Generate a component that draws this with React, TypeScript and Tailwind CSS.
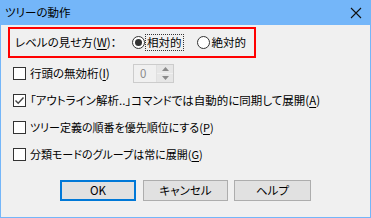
import React from "react";

const FONT = "font-['Meiryo_UI','Noto_Sans_CJK_JP',sans-serif] [font-feature-settings:'palt']";

function U({ children }: { children: React.ReactNode }) {
  return <span className="underline underline-offset-2">{children}</span>;
}

function Checkbox({ checked }: { checked?: boolean }) {
  return (
    <span className="w-[13px] h-[13px] bg-white border border-[#333] flex items-center justify-center shrink-0">
      {checked && (
        <svg width="11" height="11" viewBox="0 0 11 11">
          <path d="M1.5 5.5 L4.2 8.2 L9.5 2.5" fill="none" stroke="#444" strokeWidth="1.4" />
        </svg>
      )}
    </span>
  );
}

function Radio({ checked }: { checked?: boolean }) {
  return (
    <span className="w-[13px] h-[13px] rounded-full bg-white border border-[#333] flex items-center justify-center shrink-0">
      {checked && <span className="w-[7px] h-[7px] rounded-full bg-[#333]" />}
    </span>
  );
}

function Row({ checked, children }: { checked?: boolean; children: React.ReactNode }) {
  return (
    <div className="h-[27px] flex items-center pl-[12px] gap-[4px]">
      <Checkbox checked={checked} />
      {children}
    </div>
  );
}

export default function App() {
  return (
    <div className={`w-[371px] h-[218px] bg-[#74b6f9] flex flex-col text-[11.5px] text-black leading-none ${FONT}`}>
      <div className="h-[25px] flex items-center justify-between pl-[5px] pr-[9px] shrink-0">
        <span>ツリーの動作</span>
        <svg width="12" height="12" viewBox="0 0 12 12">
          <path d="M1 1 L11 11 M11 1 L1 11" stroke="#111" strokeWidth="1.1" />
        </svg>
      </div>
      <div className="flex-1 mx-[1px] mb-[1px] bg-[#f0f0f0] flex flex-col">
        <div className="ml-[7px] mt-[2px] w-[248px] h-[31px] border-2 border-[#ff0000] flex items-center pl-[5px]">
          <span className="w-[117px]">
            レベルの見せ方(<U>W</U>)：
          </span>
          <Radio checked />
          <span className="ml-[1px] px-[1px] py-[2px] outline-1 outline-dotted outline-[#333]">相対的</span>
          <span className="ml-[14px]">
            <Radio />
          </span>
          <span className="ml-[2px]">絶対的</span>
        </div>
        <div className="h-[2px]" />
        <Row>
          <span className="w-[99px]">
            行頭の無効桁(<U>I</U>)
          </span>
          <div className="w-[41px] h-[19px] border border-[#cccccc] bg-[#f0f0f0] flex">
            <span className="flex-1 flex items-center pl-[6px] text-[#8a8a8a]">0</span>
            <div className="w-[17px] flex flex-col border-l border-[#e0e0e0]">
              <div className="flex-1 flex items-center justify-center bg-[#e6e6e6] border-b border-[#f0f0f0]">
                <svg width="7" height="4" viewBox="0 0 7 4">
                  <path d="M0 4 L3.5 0 L7 4 Z" fill="#8a8a8a" />
                </svg>
              </div>
              <div className="flex-1 flex items-center justify-center bg-[#e6e6e6]">
                <svg width="7" height="4" viewBox="0 0 7 4">
                  <path d="M0 0 L3.5 4 L7 0 Z" fill="#8a8a8a" />
                </svg>
              </div>
            </div>
          </div>
        </Row>
        <Row checked>
          <span>
            「アウトライン解析..」コマンドでは自動的に同期して展開(<U>A</U>)
          </span>
        </Row>
        <Row>
          <span className="text-[11px]">
            ツリー定義の順番を優先順位にする(<U>P</U>)
          </span>
        </Row>
        <Row>
          <span className="text-[11px]">
            分類モードのグループは常に展開(<U>G</U>)
          </span>
        </Row>
        <div className="mt-[12px] flex pl-[59px] gap-[6px]">
          <button className="w-[76px] h-[21px] bg-[#e1e1e1] border-2 border-[#0078d7] flex items-center justify-center">
            OK
          </button>
          <button className="ml-[1px] w-[85px] h-[21px] bg-[#e1e1e1] border border-[#adadad] flex items-center justify-center">
            キャンセル
          </button>
          <button className="w-[77px] h-[21px] bg-[#e1e1e1] border border-[#adadad] flex items-center justify-center">
            ヘルプ
          </button>
        </div>
      </div>
    </div>
  );
}
